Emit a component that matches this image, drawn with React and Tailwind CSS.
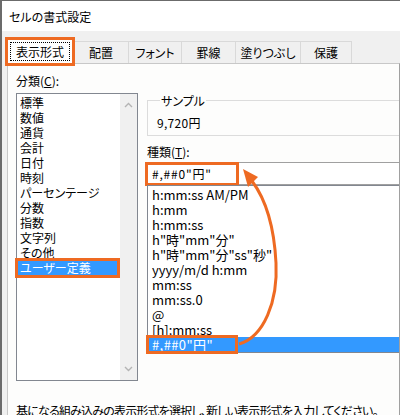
import React from 'react';

const categories = [
  '標準', '数値', '通貨', '会計', '日付', '時刻', 'パーセンテージ',
  '分数', '指数', '文字列', 'その他', 'ユーザー定義',
];

const formats = [
  'h:mm:ss AM/PM', 'h:mm', 'h:mm:ss', 'h"時"mm"分"', 'h"時"mm"分"ss"秒"',
  'yyyy/m/d h:mm', 'mm:ss', 'mm:ss.0', '@', '[h]:mm:ss', '#,##0"円"',
];

const tabs = [
  { label: '配置', w: 'w-[55px]' },
  { label: 'フォント', w: 'w-[53px]' },
  { label: '罫線', w: 'w-[54px]' },
  { label: '塗りつぶし', w: 'w-[65px]' },
  { label: '保護', w: 'w-[52px] border-r' },
];

const App = () => {
  return (
    <div className="relative w-[400px] h-[415px] overflow-hidden flex flex-col bg-[#f0f0f0] border-t border-l-2 border-[#6b6b6b] text-[12px] leading-[15px] text-black [font-family:'Noto_Sans_CJK_JP',sans-serif] [font-feature-settings:'palt']">
      {/* Title bar */}
      <div className="h-[30px] shrink-0 bg-white flex items-center pl-[7px]">セルの書式設定</div>

      {/* Tabs */}
      <div className="h-[32px] shrink-0 flex items-end pl-[3px]">
        <div className="relative z-10 -mb-[3px] w-[70px] h-[29px] flex border-[3px] border-[#ee6a22] bg-white">
          <div className="m-[2px] flex-1 flex items-center justify-center border border-dotted border-black">表示形式</div>
        </div>
        {tabs.map((t, i) => (
          <div
            key={t.label}
            className={`${t.w} ${i === 0 ? '-ml-[2px]' : ''} h-[22px] flex items-center justify-center border-t border-l border-[#d9d9d9]`}
          >
            {t.label}
          </div>
        ))}
      </div>

      {/* Panel */}
      <div className="flex-1 ml-[5px] bg-[#fdfdfc] border-t border-l border-r border-[#c8c8c8] border-r-[#a0a0a0] pl-[8px] pt-[9px]">
        <div className="flex items-start">
          {/* Left column */}
          <div className="w-[122px] shrink-0">
            <div>
              分類(<span className="underline">C</span>):
            </div>
            <div className="relative mt-[5px] h-[288px] flex border border-[#828790] bg-white">
              <div className="flex-1 pt-[1px]">
                {categories.map((c, i) => (
                  <div
                    key={c}
                    className={`h-[15px] pl-[3px] whitespace-nowrap ${i === categories.length - 1 ? 'bg-[#3399ff] text-white' : ''}`}
                  >
                    {c}
                  </div>
                ))}
              </div>
              <div className="w-[17px] bg-[#f0f0f0] flex flex-col justify-between items-center py-[8px]">
                <svg width="9" height="6" viewBox="0 0 9 6">
                  <path d="M1 5 L4.5 1.5 L8 5" fill="none" stroke="#b4b4b4" strokeWidth="1.4" />
                </svg>
                <svg width="9" height="6" viewBox="0 0 9 6">
                  <path d="M1 1 L4.5 4.5 L8 1" fill="none" stroke="#b4b4b4" strokeWidth="1.4" />
                </svg>
              </div>
              <div className="absolute -left-[2px] top-[164px] w-[105px] h-[20px] border-[3px] border-[#ee6a22]"></div>
            </div>
          </div>

          {/* Right column */}
          <div className="flex-1 ml-[9px]">
            <fieldset className="mt-[20px] border border-r-0 border-[#dcdcdc] pl-[9px] pt-[7px] pb-[5px]">
              <legend className="ml-[3px] px-[1px]">サンプル</legend>
              <div className="tracking-[0.3px]">9,720円</div>
            </fieldset>
            <div className="mt-[8px]">
              種類(<span className="underline">T</span>):
            </div>
            <div className="relative mt-[3px] h-[23px] border border-r-0 border-[#a0a0a0] bg-white pl-[4px] leading-[21px] tracking-[0.8px]">
              #,##0"円"
              <div className="absolute -left-[3px] -top-[1px] w-[94px] h-[24px] border-[3px] border-[#ee6a22]"></div>
            </div>
            <div className="relative border border-r-0 border-[#828790] bg-white pt-[1px] text-[13px]">
              {formats.map((f, i) => (
                <div
                  key={f}
                  className={`h-[15px] leading-[15px] pl-[4px] whitespace-nowrap ${i === formats.length - 1 ? 'bg-[#3399ff] text-white tracking-[0.4px]' : ''}`}
                >
                  {f}
                </div>
              ))}
              <div className="absolute -left-[2px] top-[149px] w-[92px] h-[19px] border-[3px] border-[#ee6a22]"></div>
            </div>
          </div>
        </div>
        <div className="mt-[22px] whitespace-nowrap tracking-[-0.8px]">
          基になる組み込みの表示形式を選択し、新しい表示形式を入力してください。
        </div>
      </div>

      {/* Arrow overlay */}
      <svg className="absolute left-0 top-0 pointer-events-none" width="400" height="415" viewBox="0 0 400 415">
        <path d="M237 343 C 262 336, 276 300, 274 262 C 272 222, 262 196, 250 180" fill="none" stroke="#ee6a22" strokeWidth="3" />
        <path d="M241 168 L256 176 L246 186 Z" fill="#ee6a22" />
      </svg>
    </div>
  );
};

export default App;
